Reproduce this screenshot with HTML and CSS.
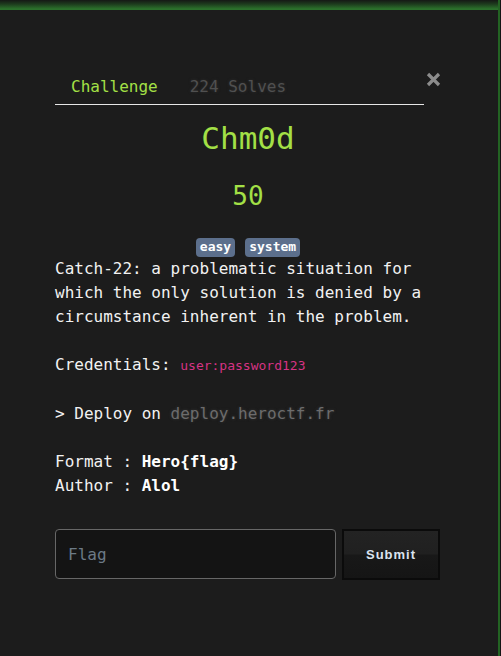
FILE: index.html
```html
<!DOCTYPE html>
<html>
<head>
<meta charset="utf-8">
<link rel="stylesheet" href="styles.css">
</head>
<body>
<div class="modal">
  <div class="modal-top"></div>
  <div class="modal-body">
    <div class="header">
      <ul class="nav">
        <li class="nav-item active">Challenge</li>
        <li class="nav-item muted">224 Solves</li>
      </ul>
      <button class="close" aria-label="Close">
        <svg width="15" height="15" viewBox="0 0 15 15"><path d="M2 2 L13 13 M13 2 L2 13" stroke="#8c8c8c" stroke-width="3.2" stroke-linecap="butt"/></svg>
      </button>
    </div>
    <h2 class="title">Chm0d</h2>
    <h3 class="value">50</h3>
    <div class="tags">
      <span class="badge">easy</span>
      <span class="badge">system</span>
    </div>
    <div class="description">
      <p>Catch-22: a problematic situation for which the only solution is denied by a circumstance inherent in the problem.</p>
      <p>Credentials: <code>user:password123</code></p>
      <p>&gt; Deploy on <span class="muted">deploy.heroctf.fr</span></p>
      <p>Format : <strong>Hero{flag}</strong><br>Author : <strong>Alol</strong></p>
    </div>
    <form class="flag-form">
      <input class="flag-input" type="text" placeholder="Flag">
      <button class="submit" type="button">Submit</button>
    </form>
  </div>
</div>
</body>
</html>
```

FILE: styles.css
```css
html, body {
  margin: 0;
  padding: 0;
  background: #141414;
  height: 100%;
}
body {
  font-family: "DejaVu Sans Mono", monospace;
  color: #f2f2f2;
  font-size: 16px;
  line-height: 24px;
}
.modal {
  width: 498px;
  height: 656px;
  background: #1c1c1c;
  border-right: 2px solid #236323;
  display: flex;
  flex-direction: column;
}
.modal-top {
  height: 10px;
  background: linear-gradient(to bottom, #151815 0%, #1d3a1d 40%, #2a6c2a 85%, #2d722d 100%);
}
.modal-body {
  padding: 54px 0 0 55px;
  width: 386px;
}
.header {
  display: flex;
  align-items: flex-start;
}
.nav {
  list-style: none;
  margin: 0;
  padding: 0;
  width: 371px;
  display: flex;
  border-bottom: 1px solid #e6e6e6;
}
.nav-item {
  padding: 11px 16px 5px;
  line-height: 24px;
}
.nav-item.active {
  color: #a3e046;
}
.nav-item.muted {
  color: #505050;
  text-shadow: 0 0 3px #333;
}
.close {
  background: none;
  border: 0;
  padding: 0;
  margin: 8px 0 0 2px;
  width: 15px;
  height: 15px;
  display: block;
}
.close svg {
  display: block;
}
.title {
  margin: 15px 0 0;
  text-align: center;
  font-weight: normal;
  font-size: 31px;
  line-height: 37px;
  color: #a3e046;
}
.value {
  margin: 24px 0 0;
  text-align: center;
  font-weight: normal;
  font-size: 26px;
  line-height: 31px;
  color: #a3e046;
}
.tags {
  margin-top: 26px;
  display: flex;
  justify-content: center;
  gap: 10px;
  height: 19px;
}
.badge {
  display: inline-block;
  background: #5c6f8c;
  color: #ffffff;
  font-weight: bold;
  font-size: 13px;
  line-height: 18px;
  padding: 0 4px;
  border-radius: 4px;
}
.description {
  margin-top: 0;
}
.description p {
  margin: 0 0 24px;
}
code {
  font-family: "DejaVu Sans Mono", monospace;
  font-size: 13px;
  color: #d63384;
}
.muted {
  color: #6c6c6c;
  text-shadow: 0 0 3px #3a3a3a;
}
strong {
  font-weight: bold;
  color: #ffffff;
}
.flag-form {
  display: flex;
  gap: 6px;
  margin-top: 31px;
}
.flag-input {
  width: 281px;
  height: 50px;
  box-sizing: border-box;
  background: #141414;
  border: 1px solid #676767;
  border-radius: 4px;
  padding: 0 12px;
  font-family: "DejaVu Sans Mono", monospace;
  font-size: 16px;
  color: #eee;
}
.flag-input::placeholder {
  color: #6c7a86;
}
.submit {
  width: 98px;
  height: 51px;
  box-sizing: border-box;
  border: 2px solid #0b0b0b;
  background: linear-gradient(to bottom, #232323 0%, #202020 48%, #181818 52%, #151515 100%);
  font-family: "Liberation Sans", Arial, sans-serif;
  font-weight: bold;
  font-size: 13px;
  letter-spacing: 1px;
  color: #dbe4f0;
  padding: 0;
}
```
